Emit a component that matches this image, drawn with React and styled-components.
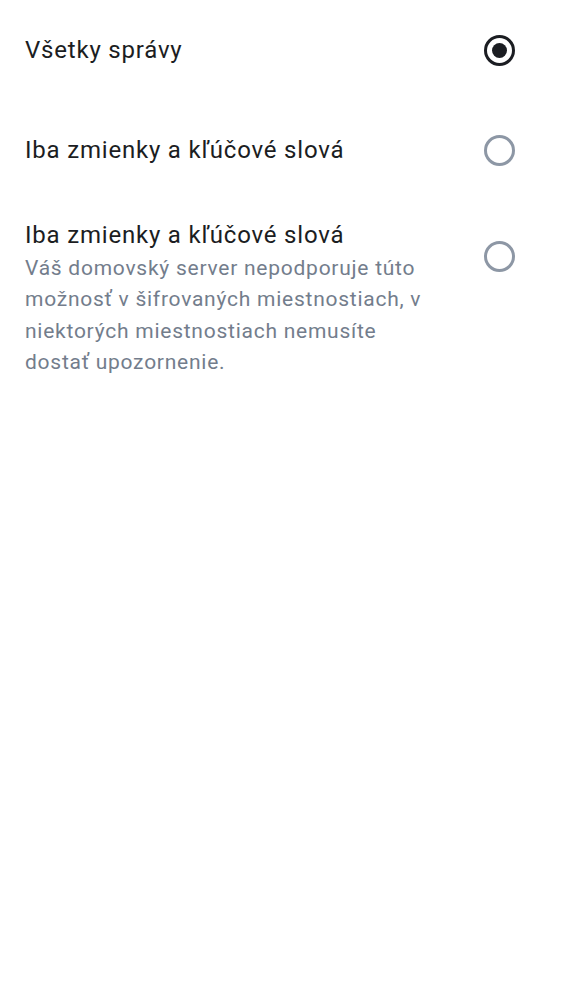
import React, { useState } from 'react';
import styled, { createGlobalStyle } from 'styled-components';

const GlobalStyle = createGlobalStyle`
    body {
        margin: 0;
        background: #ffffff;
        font-family: Roboto, "Noto Sans", sans-serif;
    }
`;

const options = [
    { id: 'all', title: 'Všetky správy' },
    { id: 'mentions', title: 'Iba zmienky a kľúčové slová' },
    {
        id: 'mentions-e2e',
        title: 'Iba zmienky a kľúčové slová',
        subtitle: 'Váš domovský server nepodporuje túto možnosť v šifrovaných miestnostiach, v niektorých miestnostiach nemusíte dostať upozornenie.'
    }
];

const App = () => {
    const [selected, setSelected] = useState('all')

    return (
        <>
            <GlobalStyle />
            <List>
                {options.map(opt => (
                    <Row key={opt.id} $tall={!!opt.subtitle} onClick={() => setSelected(opt.id)}>
                        <Texts>
                            <Title>{opt.title}</Title>
                            {opt.subtitle && <Subtitle>{opt.subtitle}</Subtitle>}
                        </Texts>
                        <Radio $checked={selected === opt.id} $tall={!!opt.subtitle} />
                    </Row>
                ))}
            </List>
        </>
    )
}

export default App

const List = styled.div`
    display: flex;
    flex-direction: column;
`;

const Row = styled.div`
    display: flex;
    align-items: ${p => p.$tall ? 'flex-start' : 'center'};
    justify-content: space-between;
    min-height: 100px;
    padding: ${p => p.$tall ? '20px 47px 0 25px' : '0 47px 0 25px'};
    box-sizing: border-box;
    cursor: pointer;
`;

const Texts = styled.div`
    display: flex;
    flex-direction: column;
    max-width: 405px;
`;

const Title = styled.div`
    font-size: 24px;
    line-height: 30px;
    color: #1b1d22;
    letter-spacing: 0.8px;
`;

const Subtitle = styled.div`
    margin-top: 3px;
    font-size: 21px;
    line-height: 31.3px;
    color: #737d8c;
    letter-spacing: 0.75px;
`;

const Radio = styled.span`
    flex: none;
    width: 31px;
    height: 31px;
    box-sizing: border-box;
    border-radius: 50%;
    border: 3px solid ${p => p.$checked ? '#1b1d22' : '#8d97a5'};
    margin-top: ${p => p.$tall ? '21px' : '0'};
    display: flex;
    align-items: center;
    justify-content: center;

    &::after {
        content: '';
        width: 15px;
        height: 15px;
        border-radius: 50%;
        background: #1b1d22;
        display: ${p => p.$checked ? 'block' : 'none'};
    }
`;
